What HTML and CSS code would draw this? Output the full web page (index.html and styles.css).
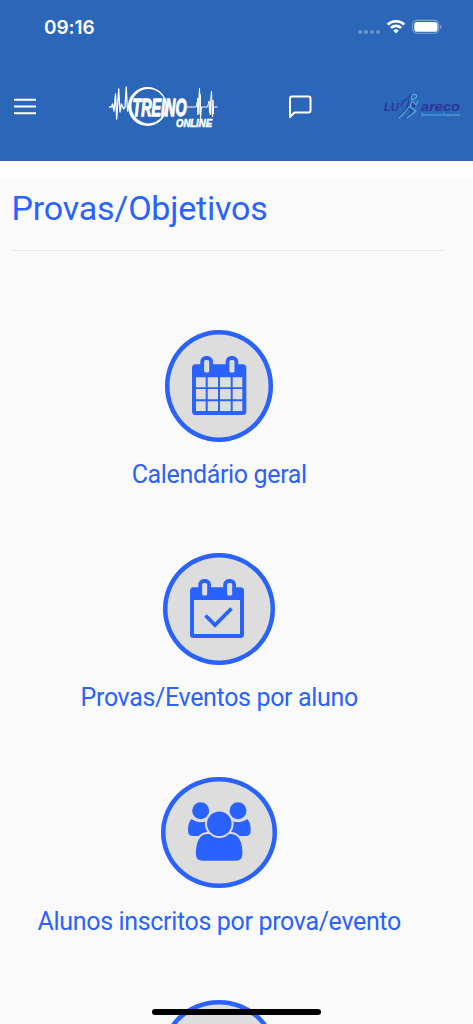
FILE: index.html
```html
<!DOCTYPE html>
<html lang="pt-BR">
<head>
    <meta charset="UTF-8">
    <meta name="viewport" content="width=device-width, initial-scale=1.0">
    <title>Provas/Objetivos</title>
    <link rel="stylesheet" href="styles.css">
</head>
<body>

    <header class="topbar">
        <div class="status">
            <span class="time">09:16</span>
            <svg class="status-icons" width="86" height="20" viewBox="0 0 86 20">
                <g fill="#fff" fill-opacity="0.3">
                    <circle cx="4" cy="15" r="2.1"/>
                    <circle cx="10" cy="15" r="2.1"/>
                    <circle cx="16" cy="15" r="2.1"/>
                    <circle cx="22" cy="15" r="2.1"/>
                </g>
                <g fill="none" stroke="#fff" stroke-width="2.7">
                    <path d="M31.700 7.600a12 12 0 0 1 16.600 0"/>
                    <path d="M34.900 11a7.300 7.300 0 0 1 10.200 0"/>
                </g>
                <path d="M37.200 13.600a4 4 0 0 1 5.600 0L40 16.600z" fill="#fff"/>
                <rect x="56.700" y="3.400" width="26" height="12.900" rx="4" fill="none" stroke="#fff" stroke-opacity="0.4" stroke-width="1.1"/>
                <rect x="58.300" y="5" width="23.200" height="9.800" rx="2.6" fill="#fff"/>
                <path d="M84.200 8q1.400.5 1.400 2t-1.400 2z" fill="#fff" fill-opacity="0.5"/>
            </svg>
        </div>

        <nav class="navbar">
            <svg class="menu" width="22" height="18" viewBox="0 0 22 18" stroke="#fff" stroke-width="2">
                <path d="M0 1.700h22M0 8.500h22M0 15.200h22"/>
            </svg>

            <svg class="logo" width="110" height="46" viewBox="0 0 110 46">
                <g fill="none" stroke="#fff" stroke-linejoin="round">
                    <path stroke-width="1.3" d="M0 23h2.500l1-3 1.500 7 1.500-17 1.200 25 2-30 1.300 23 1.500-8 2 5 1.500-2 1.200-20 1.300 24 1.500-6"/>
                    <path stroke-width="1" d="M78 23h9l1.500-6 .5 12 1.500-25 1 31 1-12h6l1.500-6 .5 12 2-22 1 26 1-10h4"/>
                    <path stroke-width="1.5" d="M88.800 14v17M91.200 10v20M101.500 18v13M104 16v14"/>
                </g>
                <path fill="#fff" fill-rule="evenodd" d="M38.500 3a19.500 19.500 0 1 0 0 39a19.500 19.500 0 1 0 0-39zM39.500 5a17 17.200 0 1 1 0 34.400a17 17.200 0 1 1 0-34.400z"/>
                <text class="logo-name" x="23.500" y="32" textLength="54" lengthAdjust="spacingAndGlyphs">TREINO</text>
                <text class="logo-sub" x="67" y="42.500" textLength="36" lengthAdjust="spacingAndGlyphs">ONLINE</text>
            </svg>

            <svg class="chat" width="24" height="25" viewBox="0 0 24 25" fill="none" stroke="#fff" stroke-width="2" stroke-linejoin="round">
                <path d="M4.500 1.500h16a2 2 0 0 1 2 2v12a2 2 0 0 1-2 2h-14L2 22V3.500a2 2 0 0 1 2.500-2z"/>
            </svg>

            <svg class="brand" width="78" height="28" viewBox="0 0 78 28">
                <text class="brand-lu" x="0" y="18" textLength="15" lengthAdjust="spacingAndGlyphs">LU</text>
                <g fill="none" stroke-linecap="round" stroke-linejoin="round">
                    <path stroke="#313398" stroke-width="1.2" d="M17 13q3-7 7-7M24 5q1-3 3-2M25 8l-2 7-5 6-3 2M28 9l1 5 3-3M24 15l4 3-3 5-4 2"/>
                    <path stroke="#4fb3dc" stroke-width="1.1" d="M28 3q2-3 4-1t-2 4-2-3M28 8l-2 6 6 4-5 4-4 3M29 8l3 4 2-4M25 14l-5 6-5 5"/>
                </g>
                <text class="brand-name" x="37" y="18" textLength="39" lengthAdjust="spacingAndGlyphs">areco</text>
                <text class="brand-sub" x="37" y="22.800" textLength="39" lengthAdjust="spacingAndGlyphs">Assessoria Esportiva</text>
            </svg>
        </nav>
    </header>

    <main class="content">
        <h1>Provas/Objetivos</h1>
        <hr>

        <div class="options">
            <a class="option">
                <span class="circle circle-calendar">
                    <svg width="55" height="60" viewBox="0 0 55 60">
                        <path fill="#2962ff" d="M3.500 8.300h47.300a3.500 3.500 0 0 1 3.500 3.500v43.700a3.500 3.500 0 0 1-3.500 3.500H3.500A3.500 3.500 0 0 1 0 55.500V11.800a3.500 3.500 0 0 1 3.500-3.500z"/>
                        <g fill="#ddd" stroke="#2962ff" stroke-width="3.8">
                            <rect x="10.200" y="2" width="8.900" height="16.500" rx="3.500"/>
                            <rect x="35.500" y="2" width="8.900" height="16.500" rx="3.500"/>
                        </g>
                        <path fill="#ddd" d="M4 21.300h9.700v10H4zM15.700 21.300H26v10H15.700zM28 21.300h10.700v10H28zM40.700 21.300h9.600v10h-9.600zM4 33h9.700v10.300H4zM15.700 33H26v10.300H15.700zM28 33h10.700v10.300H28zM40.700 33h9.600v10.300h-9.600zM4 45.300h9.700V55H4zM15.700 45.300H26V55H15.700zM28 45.300h10.700V55H28zM40.700 45.300h9.600V55h-9.600z"/>
                    </svg>
                </span>
                <span class="label">Calendário geral</span>
            </a>

            <a class="option">
                <span class="circle circle-check">
                    <svg width="55" height="60" viewBox="0 0 55 60">
                        <path fill="#2962ff" d="M3.500 8.300h47a3.500 3.500 0 0 1 3.500 3.500v43.700a3.500 3.500 0 0 1-3.500 3.500h-47A3.500 3.500 0 0 1 0 55.500V11.800a3.500 3.500 0 0 1 3.500-3.500z"/>
                        <g fill="#ddd" stroke="#2962ff" stroke-width="3.8">
                            <rect x="10.200" y="2" width="8.900" height="16.500" rx="3.500"/>
                            <rect x="35.200" y="2" width="8.900" height="16.500" rx="3.500"/>
                        </g>
                        <path fill="#ddd" d="M4 21h46v34H4z"/>
                        <path fill="none" stroke="#2962ff" stroke-width="3.8" d="M15.500 36.500l9.500 9.500 16.500-16.500"/>
                    </svg>
                </span>
                <span class="label">Provas/Eventos por aluno</span>
            </a>

            <a class="option">
                <span class="circle circle-users">
                    <svg width="63" height="60" viewBox="0 0 63 60" fill="#2962ff">
                        <circle cx="12.700" cy="8.700" r="8.500"/>
                        <circle cx="50" cy="8.700" r="8.500"/>
                        <path d="M3.500 17q4.500 3.500 9 3.200 3.500 0 6-1.200l2 15H5q-5 0-5-5 0-9 3.500-12z"/>
                        <path d="M59.300 17q-4.500 3.500-9 3.200-3.500 0-6-1.200l-2 15h15.400q5 0 5-5 0-9-3.400-12z"/>
                        <path stroke="#ddd" stroke-width="1.8" d="M19 31q-12 1-12 21 0 7.700 7.500 7.700h33.500q7.300 0 7.300-7.700 0-20-12-21z"/>
                        <circle cx="31.300" cy="21.700" r="13.300" stroke="#ddd" stroke-width="2"/>
                    </svg>
                </span>
                <span class="label">Alunos inscritos por prova/evento</span>
            </a>

            <a class="option">
                <span class="circle circle-users"></span>
            </a>
        </div>
    </main>

    <div class="home-indicator"></div>

</body>
</html>
```
FILE: styles.css
```css
* {
    margin: 0;
    padding: 0;
    box-sizing: border-box;
}
body {
    font-family: Roboto, sans-serif;
    background: #fff;
    color: #2962ff;
    height: 1024px;
    overflow: hidden;
}
svg {
    display: block;
    flex-shrink: 0;
    overflow: visible;
}
.topbar {
    height: 160.5px;
    background: #2b66b9;
    color: #fff;
}
.status {
    display: flex;
    justify-content: space-between;
    padding: 17px 31px 0 44px;
    height: 54px;
}
.time {
    font-family: Inter, sans-serif;
    font-size: 19px;
    font-weight: 600;
    line-height: 21px;
    letter-spacing: -0.1px;
}
.navbar {
    display: flex;
    align-items: center;
    height: 106px;
    padding: 0 11px 0 14px;
}
.logo {
    margin-left: 73px;
}
.logo-name {
    font: italic bold 24px "Liberation Sans", sans-serif;
    fill: #fff;
    stroke: #fff;
    stroke-width: 1.3px;
}
.logo-sub {
    font: italic bold 11.5px "Liberation Sans", sans-serif;
    fill: #fff;
    stroke: #fff;
    stroke-width: 0.6px;
}
.chat {
    margin-left: 69px;
}
.brand {
    margin-left: auto;
}
.brand-lu,
.brand-name {
    font: italic bold 10px "Liberation Sans", sans-serif;
    fill: #313398;
}
.brand-name {
    font-size: 12.5px;
}
.brand-sub {
    font: bold 4px "Liberation Sans", sans-serif;
    fill: #4fb3dc;
}
.content {
    margin-top: 17.5px;
    padding: 10px 29px 0 11.5px;
    height: 846px;
    background: #fafafa;
    overflow: hidden;
}
h1 {
    font-size: 34px;
    font-weight: 400;
    line-height: 40px;
    letter-spacing: -0.2px;
}
hr {
    margin-top: 22px;
    border: 0;
    border-top: 1px solid #e8e8e8;
}
.options {
    padding-top: 79px;
    margin-right: 17px;
}
.option {
    display: flex;
    flex-direction: column;
    align-items: center;
    height: 223.3px;
}
.circle {
    display: flex;
    justify-content: center;
    height: 111.5px;
    flex-shrink: 0;
    padding-top: 25.7px;
    background: #ddd;
    box-shadow: inset 0 0 0 4.5px #2962ff;
    border-radius: 50%;
}
.circle-calendar {
    width: 108px;
}
.circle-check {
    width: 112px;
    padding-right: 4px;
}
.circle-users {
    width: 116px;
}
.label {
    margin-top: 18.5px;
    font-size: 25px;
    line-height: 30px;
    letter-spacing: -0.34px;
    white-space: nowrap;
}
.home-indicator {
    position: fixed;
    left: 152px;
    bottom: 9px;
    width: 169px;
    height: 6px;
    border-radius: 3px;
    background: #000;
}
```
